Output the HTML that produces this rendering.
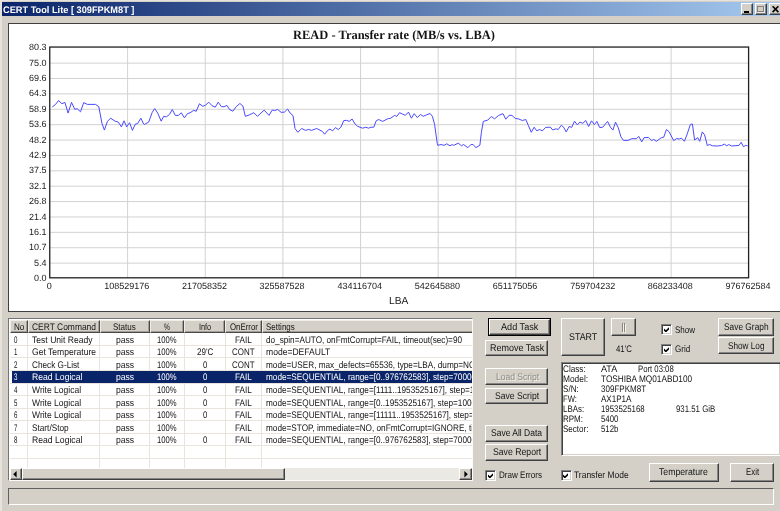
<!DOCTYPE html>
<html><head><meta charset="utf-8"><title>CERT Tool Lite</title>
<style>
html,body{margin:0;padding:0}
body{width:780px;height:511px;overflow:hidden;background:#d4d0c8;position:relative;font-family:"Liberation Sans",sans-serif;font-size:9.5px}
.abs,.btn,.hdr,.t{position:absolute;box-sizing:border-box}
.t{white-space:nowrap;line-height:12px;color:#141414;text-rendering:geometricPrecision}
.btn{background:#d4d0c8;border:1px solid;border-color:#fff #404040 #404040 #fff;box-shadow:inset -1px -1px 0 #858585}
.hdr{background:#d4d0c8;border:1px solid;border-color:#efede8 #484848 #484848 #efede8;box-shadow:inset -1px -1px 0 #a29e96}
.sunk{border:1px solid;border-color:#808080 #fff #fff #808080;box-shadow:inset 1px 1px 0 #404040,inset -1px -1px 0 #d4d0c8}
</style></head>
<body>
<div id="win" class="abs" style="left:0;top:0;width:780px;height:511px;will-change:transform">
<div class="abs" style="left:0.00px;top:0.00px;width:780.00px;height:1.20px;background:#e6e3dc;"></div>
<div class="abs" style="left:0.00px;top:0.00px;width:2.00px;height:511.00px;background:#e6e3dc;"></div>
<div class="abs" style="left:2.00px;top:2.00px;width:780.00px;height:14.00px;background:linear-gradient(90deg,#0a246a 0%,#a6caf0 100%);"></div>
<span class="t" style="top:5px;font-size:9.5px;color:#fff;font-weight:bold;left:3.00px;transform:scaleX(0.9700);transform-origin:0 50%;">CERT Tool Lite [ 309FPKM8T ]</span>
<div class="btn" style="left:741.30px;top:3.40px;width:12.10px;height:11.20px;"><div class="abs" style="left:1.8px;bottom:0.8px;width:5.2px;height:1.8px;background:#000"></div></div>
<div class="btn" style="left:754.50px;top:3.40px;width:12.30px;height:11.20px;"><div class="abs" style="left:1.4px;top:1.5px;width:7.2px;height:6.6px;border:1px solid #808080;border-top-width:1.8px;box-shadow:0.8px 0.8px 0 #f4f2ee"></div></div>
<div class="btn" style="left:768.80px;top:3.40px;width:13.20px;height:11.20px;"><svg class="abs" style="left:2.4px;top:2.1px" width="7" height="6.4" viewBox="0 0 7 6.4"><path d="M0.6 0.3 L6.4 6.1 M6.4 0.3 L0.6 6.1" stroke="#000" stroke-width="1.6" fill="none"/></svg></div>
<div class="abs" style="left:8.00px;top:23.00px;width:782.00px;height:289.00px;background:#fff;border:1px solid #404040;"></div>
<svg class="abs" style="left:0;top:0" width="780" height="511" viewBox="0 0 780 511"><g stroke="#d2d2d2" stroke-width="1"><line x1="127.60" y1="47.05" x2="127.60" y2="277.8"/><line x1="205.25" y1="47.05" x2="205.25" y2="277.8"/><line x1="282.90" y1="47.05" x2="282.90" y2="277.8"/><line x1="360.55" y1="47.05" x2="360.55" y2="277.8"/><line x1="438.20" y1="47.05" x2="438.20" y2="277.8"/><line x1="515.85" y1="47.05" x2="515.85" y2="277.8"/><line x1="593.50" y1="47.05" x2="593.50" y2="277.8"/><line x1="671.15" y1="47.05" x2="671.15" y2="277.8"/><line x1="49.75" y1="63.13" x2="748.6" y2="63.13"/><line x1="49.75" y1="78.52" x2="748.6" y2="78.52"/><line x1="49.75" y1="93.90" x2="748.6" y2="93.90"/><line x1="49.75" y1="109.28" x2="748.6" y2="109.28"/><line x1="49.75" y1="124.67" x2="748.6" y2="124.67"/><line x1="49.75" y1="140.05" x2="748.6" y2="140.05"/><line x1="49.75" y1="155.43" x2="748.6" y2="155.43"/><line x1="49.75" y1="170.82" x2="748.6" y2="170.82"/><line x1="49.75" y1="186.20" x2="748.6" y2="186.20"/><line x1="49.75" y1="201.58" x2="748.6" y2="201.58"/><line x1="49.75" y1="216.97" x2="748.6" y2="216.97"/><line x1="49.75" y1="232.35" x2="748.6" y2="232.35"/><line x1="49.75" y1="247.73" x2="748.6" y2="247.73"/><line x1="49.75" y1="263.12" x2="748.6" y2="263.12"/></g><rect x="49.75" y="47.05" width="698.85" height="230.75" fill="none" stroke="#202020" stroke-width="1.3"/><polyline points="52.3,106.9 55.3,104.7 58.5,100.6 61.9,103.7 64.9,102.4 68.1,113.1 71.5,102.4 74.7,109.2 77.3,108.8 80.5,111.8 83.7,102.6 87.3,104.4 95.6,104.4 98.8,106.7 102.0,123.6 104.4,130.1 107.4,121.4 110.6,118.2 115.1,121.2 118.3,122.1 121.4,126.9 124.0,120.8 126.7,126.8 129.6,122.7 132.4,130.4 135.4,124.0 137.6,123.6 140.8,118.2 143.7,124.0 144.5,124.4 148.7,122.1 152.2,112.4 154.7,108.6 157.7,113.1 161.2,121.2 163.7,116.3 166.3,116.9 169.5,114.4 172.3,109.5 175.3,115.4 178.5,115.4 181.3,112.8 184.4,117.8 187.4,113.7 190.0,112.8 193.8,110.3 196.2,111.3 199.4,103.8 202.8,106.3 205.6,105.1 208.8,102.2 212.1,105.8 215.3,107.1 218.2,102.2 221.4,106.7 224.0,106.7 226.9,105.4 229.7,109.6 232.9,111.2 236.2,106.7 239.9,103.5 242.9,106.0 245.3,116.3 249.1,115.0 253.8,112.7 257.4,116.3 264.2,110.1 269.0,115.4 272.2,110.1 274.7,110.5 277.7,109.5 281.2,112.4 284.4,112.1 287.6,109.0 290.1,113.1 293.0,115.6 295.0,128.5 297.8,132.3 301.7,128.5 305.5,130.4 308.7,129.4 311.5,130.4 316.7,128.5 322.2,131.3 324.7,134.2 327.6,130.4 329.9,129.1 332.6,130.8 335.4,127.6 338.3,129.5 340.9,127.2 343.8,120.5 346.7,120.4 349.2,121.4 352.1,119.0 355.0,124.0 357.6,126.3 362.7,128.2 365.9,127.2 368.5,128.2 371.0,127.2 373.8,127.2 376.2,120.8 378.7,119.5 382.6,121.4 388.3,118.5 390.3,118.5 394.7,115.3 396.7,116.5 399.5,112.7 402.4,114.0 405.4,115.3 408.5,112.1 411.4,118.2 414.2,113.7 417.4,117.6 420.4,114.4 423.2,116.3 426.2,115.0 430.1,113.5 432.4,116.3 434.6,124.4 437.2,143.2 437.8,145.4 441.0,144.5 444.0,145.4 446.8,143.8 450.0,145.8 452.2,144.5 453.5,145.4 458.3,143.2 461.5,145.8 463.5,144.5 467.9,147.7 470.9,144.5 473.1,144.5 475.9,147.7 479.9,145.1 481.4,132.3 483.3,121.4 487.8,120.1 491.3,116.5 494.5,118.8 498.7,115.4 503.0,113.7 505.8,119.2 509.0,115.4 511.9,115.4 515.4,118.5 518.2,118.8 522.4,120.5 525.8,119.5 528.3,125.3 531.3,132.3 534.1,127.2 536.7,130.8 539.5,129.5 542.4,130.8 545.6,127.4 550.5,127.2 552.7,130.0 555.9,128.8 558.2,129.5 561.3,125.3 563.6,127.2 566.2,131.9 569.1,126.5 571.7,127.4 574.5,121.2 577.3,124.9 579.9,122.1 582.8,123.3 585.8,120.5 588.6,126.5 591.5,120.8 594.4,124.6 596.9,121.4 599.7,127.6 602.7,127.2 607.6,121.4 610.4,127.2 612.9,130.1 615.5,122.1 618.3,127.8 620.9,136.8 623.5,140.4 627.9,140.4 631.8,138.7 636.3,138.7 638.8,136.4 641.7,141.9 644.0,137.7 648.5,137.4 651.7,140.6 653.6,139.4 656.4,141.3 661.3,137.7 663.8,137.1 666.4,129.5 669.0,131.7 673.7,140.6 676.7,138.5 679.2,139.1 681.4,138.1 684.4,141.3 686.9,134.9 690.4,124.4 692.4,124.0 694.6,140.0 697.8,137.7 699.7,141.3 702.3,131.9 704.6,134.9 707.3,145.5 709.7,144.5 712.3,145.8 717.2,146.0 721.7,145.5 724.2,144.1 726.8,145.8 728.7,144.5 731.5,146.0 739.0,145.4 741.2,142.3 743.5,146.8 745.4,145.4 747.6,145.8" fill="none" stroke="#4a4aff" stroke-width="1" stroke-linejoin="round"/></svg>
<span class="t" style="top:29px;font-size:12.8px;font-weight:bold;font-family:'Liberation Serif',serif;left:293.30px;transform:scaleX(0.9745);transform-origin:0 50%;">READ - Transfer rate (MB/s vs. LBA)</span>
<span class="t" style="top:41px;font-size:9.0px;color:#202020;right:733.60px;transform:scaleX(1.0);transform-origin:100% 50%;">80.3</span>
<span class="t" style="top:57px;font-size:9.0px;color:#202020;right:733.60px;transform:scaleX(1.0);transform-origin:100% 50%;">75.0</span>
<span class="t" style="top:72px;font-size:9.0px;color:#202020;right:733.60px;transform:scaleX(1.0);transform-origin:100% 50%;">69.6</span>
<span class="t" style="top:87px;font-size:9.0px;color:#202020;right:733.60px;transform:scaleX(1.0);transform-origin:100% 50%;">64.3</span>
<span class="t" style="top:103px;font-size:9.0px;color:#202020;right:733.60px;transform:scaleX(1.0);transform-origin:100% 50%;">58.9</span>
<span class="t" style="top:118px;font-size:9.0px;color:#202020;right:733.60px;transform:scaleX(1.0);transform-origin:100% 50%;">53.6</span>
<span class="t" style="top:134px;font-size:9.0px;color:#202020;right:733.60px;transform:scaleX(1.0);transform-origin:100% 50%;">48.2</span>
<span class="t" style="top:149px;font-size:9.0px;color:#202020;right:733.60px;transform:scaleX(1.0);transform-origin:100% 50%;">42.9</span>
<span class="t" style="top:164px;font-size:9.0px;color:#202020;right:733.60px;transform:scaleX(1.0);transform-origin:100% 50%;">37.5</span>
<span class="t" style="top:180px;font-size:9.0px;color:#202020;right:733.60px;transform:scaleX(1.0);transform-origin:100% 50%;">32.1</span>
<span class="t" style="top:195px;font-size:9.0px;color:#202020;right:733.60px;transform:scaleX(1.0);transform-origin:100% 50%;">26.8</span>
<span class="t" style="top:211px;font-size:9.0px;color:#202020;right:733.60px;transform:scaleX(1.0);transform-origin:100% 50%;">21.4</span>
<span class="t" style="top:226px;font-size:9.0px;color:#202020;right:733.60px;transform:scaleX(1.0);transform-origin:100% 50%;">16.1</span>
<span class="t" style="top:241px;font-size:9.0px;color:#202020;right:733.60px;transform:scaleX(1.0);transform-origin:100% 50%;">10.7</span>
<span class="t" style="top:257px;font-size:9.0px;color:#202020;right:733.60px;transform:scaleX(1.0);transform-origin:100% 50%;">5.4</span>
<span class="t" style="top:272px;font-size:9.0px;color:#202020;right:733.60px;transform:scaleX(1.0);transform-origin:100% 50%;">0.0</span>
<span class="t" style="top:280px;font-size:9.0px;color:#202020;left:49.15px;transform:translateX(-50%) scaleX(1.0);transform-origin:50% 50%;">0</span>
<span class="t" style="top:280px;font-size:9.0px;color:#202020;left:126.80px;transform:translateX(-50%) scaleX(1.0);transform-origin:50% 50%;">108529176</span>
<span class="t" style="top:280px;font-size:9.0px;color:#202020;left:204.45px;transform:translateX(-50%) scaleX(1.0);transform-origin:50% 50%;">217058352</span>
<span class="t" style="top:280px;font-size:9.0px;color:#202020;left:282.10px;transform:translateX(-50%) scaleX(1.0);transform-origin:50% 50%;">325587528</span>
<span class="t" style="top:280px;font-size:9.0px;color:#202020;left:359.75px;transform:translateX(-50%) scaleX(1.0);transform-origin:50% 50%;">434116704</span>
<span class="t" style="top:280px;font-size:9.0px;color:#202020;left:437.40px;transform:translateX(-50%) scaleX(1.0);transform-origin:50% 50%;">542645880</span>
<span class="t" style="top:280px;font-size:9.0px;color:#202020;left:515.05px;transform:translateX(-50%) scaleX(1.0);transform-origin:50% 50%;">651175056</span>
<span class="t" style="top:280px;font-size:9.0px;color:#202020;left:592.70px;transform:translateX(-50%) scaleX(1.0);transform-origin:50% 50%;">759704232</span>
<span class="t" style="top:280px;font-size:9.0px;color:#202020;left:670.35px;transform:translateX(-50%) scaleX(1.0);transform-origin:50% 50%;">868233408</span>
<span class="t" style="top:280px;font-size:9.0px;color:#202020;left:748.00px;transform:translateX(-50%) scaleX(1.0);transform-origin:50% 50%;">976762584</span>
<span class="t" style="top:296px;font-size:10.3px;color:#202020;left:388.90px;transform:scaleX(0.9888);transform-origin:0 50%;">LBA</span>
<div class="abs" style="left:8.20px;top:318.40px;width:464.70px;height:163.00px;background:#fff;border:solid;border-width:1.6px 1.2px 1.2px 1.6px;border-color:#747474 #fbfaf8 #fbfaf8 #747474;"></div>
<div class="abs" style="left:9.80px;top:320.00px;width:461.90px;height:160.20px;overflow:hidden;"><div class="hdr" style="left:-0.20px;top:-0.40px;width:18.00px;height:13.80px;"></div>
<div class="hdr" style="left:17.80px;top:-0.40px;width:72.10px;height:13.80px;"></div>
<div class="hdr" style="left:89.90px;top:-0.40px;width:50.20px;height:13.80px;"></div>
<div class="hdr" style="left:140.10px;top:-0.40px;width:34.60px;height:13.80px;"></div>
<div class="hdr" style="left:174.70px;top:-0.40px;width:40.60px;height:13.80px;"></div>
<div class="hdr" style="left:215.30px;top:-0.40px;width:36.80px;height:13.80px;"></div>
<div class="hdr" style="left:252.10px;top:-0.40px;width:212.80px;height:13.80px;"></div>
<div class="abs" style="left:0.00px;top:24.94px;width:461.90px;height:1.00px;background:#e9e5dd;"></div>
<div class="abs" style="left:0.00px;top:37.48px;width:461.90px;height:1.00px;background:#e9e5dd;"></div>
<div class="abs" style="left:0.00px;top:50.02px;width:461.90px;height:1.00px;background:#e9e5dd;"></div>
<div class="abs" style="left:0.00px;top:62.56px;width:461.90px;height:1.00px;background:#e9e5dd;"></div>
<div class="abs" style="left:0.00px;top:75.10px;width:461.90px;height:1.00px;background:#e9e5dd;"></div>
<div class="abs" style="left:0.00px;top:87.64px;width:461.90px;height:1.00px;background:#e9e5dd;"></div>
<div class="abs" style="left:0.00px;top:100.18px;width:461.90px;height:1.00px;background:#e9e5dd;"></div>
<div class="abs" style="left:0.00px;top:112.72px;width:461.90px;height:1.00px;background:#e9e5dd;"></div>
<div class="abs" style="left:0.00px;top:125.26px;width:461.90px;height:1.00px;background:#e9e5dd;"></div>
<div class="abs" style="left:0.00px;top:137.80px;width:461.90px;height:1.00px;background:#e9e5dd;"></div>
<div class="abs" style="left:17.30px;top:13.00px;width:1.00px;height:134.80px;background:#e9e5dd;"></div>
<div class="abs" style="left:89.40px;top:13.00px;width:1.00px;height:134.80px;background:#e9e5dd;"></div>
<div class="abs" style="left:139.60px;top:13.00px;width:1.00px;height:134.80px;background:#e9e5dd;"></div>
<div class="abs" style="left:174.20px;top:13.00px;width:1.00px;height:134.80px;background:#e9e5dd;"></div>
<div class="abs" style="left:214.80px;top:13.00px;width:1.00px;height:134.80px;background:#e9e5dd;"></div>
<div class="abs" style="left:251.60px;top:13.00px;width:1.00px;height:134.80px;background:#e9e5dd;"></div>
<div class="abs" style="left:2.30px;top:51.30px;width:459.60px;height:11.40px;background:#0a246a;"></div>
<div class="abs" style="left:0.00px;top:147.70px;width:461.90px;height:12.50px;background:#ebe9e4;"></div>
<div class="btn" style="left:0.00px;top:147.70px;width:11.80px;height:12.50px;"><svg class="abs" style="left:2.6px;top:2.7px" width="4" height="6.4" viewBox="0 0 4 6.4"><path d="M3.6 0 L3.6 6.4 L0.2 3.2Z" fill="#000"/></svg></div>
<div class="btn" style="left:11.80px;top:147.70px;width:263.80px;height:12.50px;"></div>
<div class="btn" style="left:449.70px;top:147.70px;width:12.20px;height:12.50px;"><svg class="abs" style="left:3.4px;top:2.7px" width="4" height="6.4" viewBox="0 0 4 6.4"><path d="M0.4 0 L0.4 6.4 L3.8 3.2Z" fill="#000"/></svg></div></div>
<div class="abs" style="left:0.00px;top:0.00px;width:471.70px;height:511.00px;overflow:hidden;"><span class="t" style="top:322px;font-size:9.5px;left:13.60px;transform:scaleX(0.8553);transform-origin:0 50%;">No</span>
<span class="t" style="top:322px;font-size:9.5px;left:32.00px;transform:scaleX(0.8894);transform-origin:0 50%;">CERT Command</span>
<span class="t" style="top:322px;font-size:9.5px;left:113.30px;transform:scaleX(0.8466);transform-origin:0 50%;">Status</span>
<span class="t" style="top:322px;font-size:9.5px;left:164.00px;transform:scaleX(0.6978);transform-origin:0 50%;">%</span>
<span class="t" style="top:322px;font-size:9.5px;left:198.70px;transform:scaleX(0.7690);transform-origin:0 50%;">Info</span>
<span class="t" style="top:322px;font-size:9.5px;left:229.90px;transform:scaleX(0.8261);transform-origin:0 50%;">OnError</span>
<span class="t" style="top:322px;font-size:9.5px;left:266.30px;transform:scaleX(0.8357);transform-origin:0 50%;">Settings</span>
<span class="t" style="top:335px;font-size:9.5px;left:13.50px;transform:scaleX(0.6449);transform-origin:0 50%;">0</span>
<span class="t" style="top:335px;font-size:9.5px;left:32.10px;transform:scaleX(0.9035);transform-origin:0 50%;">Test Unit Ready</span>
<span class="t" style="top:335px;font-size:9.5px;left:115.90px;transform:scaleX(0.9030);transform-origin:0 50%;">pass</span>
<span class="t" style="top:335px;font-size:9.5px;left:157.30px;transform:scaleX(0.8059);transform-origin:0 50%;">100%</span>
<span class="t" style="top:335px;font-size:9.5px;left:234.90px;transform:scaleX(0.8605);transform-origin:0 50%;">FAIL</span>
<span class="t" style="top:335px;font-size:9.5px;left:266.30px;transform:scaleX(0.8609);transform-origin:0 50%;">do_spin=AUTO, onFmtCorrupt=FAIL, timeout(sec)=90</span>
<span class="t" style="top:347px;font-size:9.5px;left:13.50px;transform:scaleX(0.6449);transform-origin:0 50%;">1</span>
<span class="t" style="top:347px;font-size:9.5px;left:32.10px;transform:scaleX(0.9015);transform-origin:0 50%;">Get Temperature</span>
<span class="t" style="top:347px;font-size:9.5px;left:115.90px;transform:scaleX(0.9030);transform-origin:0 50%;">pass</span>
<span class="t" style="top:347px;font-size:9.5px;left:157.30px;transform:scaleX(0.8059);transform-origin:0 50%;">100%</span>
<span class="t" style="top:347px;font-size:9.5px;left:196.70px;transform:scaleX(0.8525);transform-origin:0 50%;">29&#x27;C</span>
<span class="t" style="top:347px;font-size:9.5px;left:232.00px;transform:scaleX(0.8354);transform-origin:0 50%;">CONT</span>
<span class="t" style="top:347px;font-size:9.5px;left:266.30px;transform:scaleX(0.9007);transform-origin:0 50%;">mode=DEFAULT</span>
<span class="t" style="top:360px;font-size:9.5px;left:13.50px;transform:scaleX(0.6449);transform-origin:0 50%;">2</span>
<span class="t" style="top:360px;font-size:9.5px;left:32.10px;transform:scaleX(0.8632);transform-origin:0 50%;">Check G-List</span>
<span class="t" style="top:360px;font-size:9.5px;left:115.90px;transform:scaleX(0.9030);transform-origin:0 50%;">pass</span>
<span class="t" style="top:360px;font-size:9.5px;left:157.30px;transform:scaleX(0.8059);transform-origin:0 50%;">100%</span>
<span class="t" style="top:360px;font-size:9.5px;left:202.70px;transform:scaleX(0.8156);transform-origin:0 50%;">0</span>
<span class="t" style="top:360px;font-size:9.5px;left:232.00px;transform:scaleX(0.8354);transform-origin:0 50%;">CONT</span>
<span class="t" style="top:360px;font-size:9.5px;left:266.30px;transform:scaleX(0.8640);transform-origin:0 50%;">mode=USER, max_defects=65536, type=LBA, dump=NO, file=</span>
<span class="t" style="top:372px;font-size:9.5px;color:#fff;left:13.50px;transform:scaleX(0.6449);transform-origin:0 50%;">3</span>
<span class="t" style="top:372px;font-size:9.5px;color:#fff;left:32.10px;transform:scaleX(0.9084);transform-origin:0 50%;">Read Logical</span>
<span class="t" style="top:372px;font-size:9.5px;color:#fff;left:115.90px;transform:scaleX(0.9030);transform-origin:0 50%;">pass</span>
<span class="t" style="top:372px;font-size:9.5px;color:#fff;left:157.30px;transform:scaleX(0.8059);transform-origin:0 50%;">100%</span>
<span class="t" style="top:372px;font-size:9.5px;color:#fff;left:202.70px;transform:scaleX(0.8156);transform-origin:0 50%;">0</span>
<span class="t" style="top:372px;font-size:9.5px;color:#fff;left:234.90px;transform:scaleX(0.8605);transform-origin:0 50%;">FAIL</span>
<span class="t" style="top:372px;font-size:9.5px;color:#fff;left:266.30px;transform:scaleX(0.8640);transform-origin:0 50%;">mode=SEQUENTIAL, range=[0..976762583], step=70000, verify</span>
<span class="t" style="top:385px;font-size:9.5px;left:13.50px;transform:scaleX(0.6449);transform-origin:0 50%;">4</span>
<span class="t" style="top:385px;font-size:9.5px;left:32.10px;transform:scaleX(0.8973);transform-origin:0 50%;">Write Logical</span>
<span class="t" style="top:385px;font-size:9.5px;left:115.90px;transform:scaleX(0.9030);transform-origin:0 50%;">pass</span>
<span class="t" style="top:385px;font-size:9.5px;left:157.30px;transform:scaleX(0.8059);transform-origin:0 50%;">100%</span>
<span class="t" style="top:385px;font-size:9.5px;left:202.70px;transform:scaleX(0.8156);transform-origin:0 50%;">0</span>
<span class="t" style="top:385px;font-size:9.5px;left:234.90px;transform:scaleX(0.8605);transform-origin:0 50%;">FAIL</span>
<span class="t" style="top:385px;font-size:9.5px;left:266.30px;transform:scaleX(0.8640);transform-origin:0 50%;">mode=SEQUENTIAL, range=[1111..1953525167], step=11111</span>
<span class="t" style="top:398px;font-size:9.5px;left:13.50px;transform:scaleX(0.6449);transform-origin:0 50%;">5</span>
<span class="t" style="top:398px;font-size:9.5px;left:32.10px;transform:scaleX(0.8973);transform-origin:0 50%;">Write Logical</span>
<span class="t" style="top:398px;font-size:9.5px;left:115.90px;transform:scaleX(0.9030);transform-origin:0 50%;">pass</span>
<span class="t" style="top:398px;font-size:9.5px;left:157.30px;transform:scaleX(0.8059);transform-origin:0 50%;">100%</span>
<span class="t" style="top:398px;font-size:9.5px;left:202.70px;transform:scaleX(0.8156);transform-origin:0 50%;">0</span>
<span class="t" style="top:398px;font-size:9.5px;left:234.90px;transform:scaleX(0.8605);transform-origin:0 50%;">FAIL</span>
<span class="t" style="top:398px;font-size:9.5px;left:266.30px;transform:scaleX(0.8640);transform-origin:0 50%;">mode=SEQUENTIAL, range=[0..1953525167], step=100000</span>
<span class="t" style="top:410px;font-size:9.5px;left:13.50px;transform:scaleX(0.6449);transform-origin:0 50%;">6</span>
<span class="t" style="top:410px;font-size:9.5px;left:32.10px;transform:scaleX(0.8973);transform-origin:0 50%;">Write Logical</span>
<span class="t" style="top:410px;font-size:9.5px;left:115.90px;transform:scaleX(0.9030);transform-origin:0 50%;">pass</span>
<span class="t" style="top:410px;font-size:9.5px;left:157.30px;transform:scaleX(0.8059);transform-origin:0 50%;">100%</span>
<span class="t" style="top:410px;font-size:9.5px;left:202.70px;transform:scaleX(0.8156);transform-origin:0 50%;">0</span>
<span class="t" style="top:410px;font-size:9.5px;left:234.90px;transform:scaleX(0.8605);transform-origin:0 50%;">FAIL</span>
<span class="t" style="top:410px;font-size:9.5px;left:266.30px;transform:scaleX(0.8640);transform-origin:0 50%;">mode=SEQUENTIAL, range=[11111..1953525167], step=9999</span>
<span class="t" style="top:423px;font-size:9.5px;left:13.50px;transform:scaleX(0.6449);transform-origin:0 50%;">7</span>
<span class="t" style="top:423px;font-size:9.5px;left:32.10px;transform:scaleX(0.8667);transform-origin:0 50%;">Start/Stop</span>
<span class="t" style="top:423px;font-size:9.5px;left:115.90px;transform:scaleX(0.9030);transform-origin:0 50%;">pass</span>
<span class="t" style="top:423px;font-size:9.5px;left:157.30px;transform:scaleX(0.8059);transform-origin:0 50%;">100%</span>
<span class="t" style="top:423px;font-size:9.5px;left:234.90px;transform:scaleX(0.8605);transform-origin:0 50%;">FAIL</span>
<span class="t" style="top:423px;font-size:9.5px;left:266.30px;transform:scaleX(0.8640);transform-origin:0 50%;">mode=STOP, immediate=NO, onFmtCorrupt=IGNORE, timeout</span>
<span class="t" style="top:435px;font-size:9.5px;left:13.50px;transform:scaleX(0.6449);transform-origin:0 50%;">8</span>
<span class="t" style="top:435px;font-size:9.5px;left:32.10px;transform:scaleX(0.9084);transform-origin:0 50%;">Read Logical</span>
<span class="t" style="top:435px;font-size:9.5px;left:115.90px;transform:scaleX(0.9030);transform-origin:0 50%;">pass</span>
<span class="t" style="top:435px;font-size:9.5px;left:157.30px;transform:scaleX(0.8059);transform-origin:0 50%;">100%</span>
<span class="t" style="top:435px;font-size:9.5px;left:202.70px;transform:scaleX(0.8156);transform-origin:0 50%;">0</span>
<span class="t" style="top:435px;font-size:9.5px;left:234.90px;transform:scaleX(0.8605);transform-origin:0 50%;">FAIL</span>
<span class="t" style="top:435px;font-size:9.5px;left:266.30px;transform:scaleX(0.8640);transform-origin:0 50%;">mode=SEQUENTIAL, range=[0..976762583], step=70000, verify</span></div>
<div class="abs" style="left:488.20px;top:318.30px;width:62.60px;height:17.50px;background:#000;"><div class="btn" style="left:0.90px;top:0.90px;width:60.80px;height:15.70px;"></div></div><span class="t" style="top:322px;font-size:9.8px;left:500.50px;transform:scaleX(0.9308);transform-origin:0 50%;">Add Task</span>
<div class="btn" style="left:485.10px;top:339.90px;width:62.60px;height:16.50px;"></div><span class="t" style="top:343px;font-size:9.8px;left:489.80px;transform:scaleX(0.9183);transform-origin:0 50%;">Remove Task</span>
<div class="btn" style="left:485.10px;top:368.40px;width:62.60px;height:17.00px;"></div><span class="t" style="top:373px;font-size:9.8px;color:#f1efea;left:496.70px;transform:scaleX(0.8692);transform-origin:0 50%;">Load Script</span><span class="t" style="top:372px;font-size:9.8px;color:#8e8b85;left:495.90px;transform:scaleX(0.8692);transform-origin:0 50%;">Load Script</span>
<div class="btn" style="left:485.10px;top:387.60px;width:62.60px;height:16.80px;"></div><span class="t" style="top:391px;font-size:9.8px;left:494.90px;transform:scaleX(0.8798);transform-origin:0 50%;">Save Script</span>
<div class="btn" style="left:485.10px;top:425.30px;width:62.60px;height:16.70px;"></div><span class="t" style="top:428px;font-size:9.8px;left:491.20px;transform:scaleX(0.8683);transform-origin:0 50%;">Save All Data</span>
<div class="btn" style="left:485.10px;top:444.20px;width:62.60px;height:16.80px;"></div><span class="t" style="top:447px;font-size:9.8px;left:492.70px;transform:scaleX(0.8864);transform-origin:0 50%;">Save Report</span>
<div class="btn" style="left:560.90px;top:318.10px;width:44.10px;height:37.60px;"></div><span class="t" style="top:332px;font-size:9.8px;left:568.70px;transform:scaleX(0.9035);transform-origin:0 50%;">START</span>
<div class="btn" style="left:611.00px;top:318.10px;width:25.10px;height:17.60px;"><div class="abs" style="left:9.9px;top:3.8px;width:1px;height:9px;background:#8a8780"></div><div class="abs" style="left:12.4px;top:3.8px;width:1px;height:9px;background:#8a8780"></div><div class="abs" style="left:10.9px;top:4.6px;width:0.8px;height:9px;background:#f4f2ee"></div><div class="abs" style="left:13.4px;top:4.6px;width:0.8px;height:9px;background:#f4f2ee"></div></div>
<div class="btn" style="left:717.80px;top:318.10px;width:56.30px;height:17.50px;"></div><span class="t" style="top:322px;font-size:9.8px;left:723.70px;transform:scaleX(0.8530);transform-origin:0 50%;">Save Graph</span>
<div class="btn" style="left:717.80px;top:337.10px;width:56.30px;height:17.40px;"></div><span class="t" style="top:341px;font-size:9.8px;left:727.60px;transform:scaleX(0.8370);transform-origin:0 50%;">Show Log</span>
<div class="btn" style="left:648.60px;top:462.50px;width:70.40px;height:19.10px;"></div><span class="t" style="top:467px;font-size:9.8px;left:659.40px;transform:scaleX(0.8868);transform-origin:0 50%;">Temperature</span>
<div class="btn" style="left:730.10px;top:462.50px;width:44.10px;height:19.10px;"></div><span class="t" style="top:467px;font-size:9.8px;left:745.90px;transform:scaleX(0.8028);transform-origin:0 50%;">Exit</span>
<span class="t" style="top:344px;font-size:9.5px;left:616.00px;transform:scaleX(0.8213);transform-origin:0 50%;">41&#x27;C</span>
<div class="abs sunk" style="left:661.20px;top:323.60px;width:11.00px;height:11.00px;background:#fff;"><svg class="abs" style="left:1.5px;top:2.3px" width="5.4" height="5.4" viewBox="0 0 7 7"><path d="M0 1.9 L2.4 4.3 L7 -0.3 L7 2.6 L2.4 7.2 L0 4.8Z" fill="#000"/></svg></div><span class="t" style="top:325px;font-size:9.5px;left:675.00px;transform:scaleX(0.8446);transform-origin:0 50%;">Show</span>
<div class="abs sunk" style="left:661.20px;top:343.70px;width:11.00px;height:11.00px;background:#fff;"><svg class="abs" style="left:1.5px;top:2.3px" width="5.4" height="5.4" viewBox="0 0 7 7"><path d="M0 1.9 L2.4 4.3 L7 -0.3 L7 2.6 L2.4 7.2 L0 4.8Z" fill="#000"/></svg></div><span class="t" style="top:344px;font-size:9.5px;left:675.00px;transform:scaleX(0.8466);transform-origin:0 50%;">Grid</span>
<div class="abs sunk" style="left:485.40px;top:469.50px;width:11.00px;height:11.00px;background:#fff;"><svg class="abs" style="left:1.5px;top:2.3px" width="5.4" height="5.4" viewBox="0 0 7 7"><path d="M0 1.9 L2.4 4.3 L7 -0.3 L7 2.6 L2.4 7.2 L0 4.8Z" fill="#000"/></svg></div><span class="t" style="top:470px;font-size:9.5px;left:499.10px;transform:scaleX(0.8484);transform-origin:0 50%;">Draw Errors</span>
<div class="abs sunk" style="left:560.50px;top:469.50px;width:11.00px;height:11.00px;background:#fff;"><svg class="abs" style="left:1.5px;top:2.3px" width="5.4" height="5.4" viewBox="0 0 7 7"><path d="M0 1.9 L2.4 4.3 L7 -0.3 L7 2.6 L2.4 7.2 L0 4.8Z" fill="#000"/></svg></div><span class="t" style="top:470px;font-size:9.5px;left:574.40px;transform:scaleX(0.8906);transform-origin:0 50%;">Transfer Mode</span>
<div class="abs sunk" style="left:560.80px;top:361.90px;width:220.20px;height:94.00px;background:#fff;"></div>
<span class="t" style="top:364px;font-size:9.5px;left:563.20px;transform:scaleX(0.8595);transform-origin:0 50%;">Class:</span>
<span class="t" style="top:364px;font-size:9.5px;left:600.70px;transform:scaleX(0.9532);transform-origin:0 50%;">ATA</span>
<span class="t" style="top:374px;font-size:9.5px;left:563.20px;transform:scaleX(0.8807);transform-origin:0 50%;">Model:</span>
<span class="t" style="top:374px;font-size:9.5px;left:600.70px;transform:scaleX(0.8686);transform-origin:0 50%;">TOSHIBA MQ01ABD100</span>
<span class="t" style="top:384px;font-size:9.5px;left:563.20px;transform:scaleX(0.8497);transform-origin:0 50%;">S/N:</span>
<span class="t" style="top:384px;font-size:9.5px;left:600.70px;transform:scaleX(0.8455);transform-origin:0 50%;">309FPKM8T</span>
<span class="t" style="top:394px;font-size:9.5px;left:563.20px;transform:scaleX(0.8061);transform-origin:0 50%;">FW:</span>
<span class="t" style="top:394px;font-size:9.5px;left:600.70px;transform:scaleX(0.8482);transform-origin:0 50%;">AX1P1A</span>
<span class="t" style="top:404px;font-size:9.5px;left:563.20px;transform:scaleX(0.8319);transform-origin:0 50%;">LBAs:</span>
<span class="t" style="top:404px;font-size:9.5px;left:600.70px;transform:scaleX(0.8254);transform-origin:0 50%;">1953525168</span>
<span class="t" style="top:414px;font-size:9.5px;left:563.20px;transform:scaleX(0.8421);transform-origin:0 50%;">RPM:</span>
<span class="t" style="top:414px;font-size:9.5px;left:600.70px;transform:scaleX(0.8232);transform-origin:0 50%;">5400</span>
<span class="t" style="top:424px;font-size:9.5px;left:563.20px;transform:scaleX(0.8468);transform-origin:0 50%;">Sector:</span>
<span class="t" style="top:424px;font-size:9.5px;left:600.70px;transform:scaleX(0.8232);transform-origin:0 50%;">512b</span>
<span class="t" style="top:364px;font-size:9.5px;left:638.40px;transform:scaleX(0.8143);transform-origin:0 50%;">Port 03:08</span>
<span class="t" style="top:404px;font-size:9.5px;left:675.90px;transform:scaleX(0.8244);transform-origin:0 50%;">931.51 GiB</span>
<div class="abs" style="left:8.30px;top:487.80px;width:765.50px;height:17.20px;border:1px solid;border-color:#606060 #fff #fff #606060;"></div>
</div>
</body></html>
